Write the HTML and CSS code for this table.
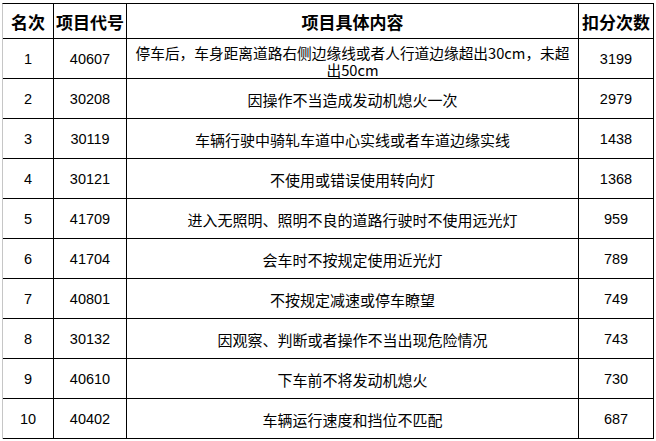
FILE: index.html
```html
<!DOCTYPE html>
<html lang="zh-CN">
<head>
<meta charset="utf-8">
<title>扣分排行</title>
<link rel="stylesheet" href="styles.css">
</head>
<body>
<div class="sheet">
  <div class="grid">
    <div class="cell head">名次</div>
    <div class="cell head">项目代号</div>
    <div class="cell head">项目具体内容</div>
    <div class="cell head">扣分次数</div>

    <div class="cell num">1</div>
    <div class="cell num">40607</div>
    <div class="cell text two"><span class="wrap">停车后，车身距离道路右侧边缘线或者人行道边缘超出30cm，未超出50cm</span></div>
    <div class="cell num">3199</div>

    <div class="cell num">2</div>
    <div class="cell num">30208</div>
    <div class="cell text">因操作不当造成发动机熄火一次</div>
    <div class="cell num">2979</div>

    <div class="cell num">3</div>
    <div class="cell num">30119</div>
    <div class="cell text">车辆行驶中骑轧车道中心实线或者车道边缘实线</div>
    <div class="cell num">1438</div>

    <div class="cell num">4</div>
    <div class="cell num">30121</div>
    <div class="cell text">不使用或错误使用转向灯</div>
    <div class="cell num">1368</div>

    <div class="cell num">5</div>
    <div class="cell num">41709</div>
    <div class="cell text">进入无照明、照明不良的道路行驶时不使用远光灯</div>
    <div class="cell num">959</div>

    <div class="cell num">6</div>
    <div class="cell num">41704</div>
    <div class="cell text">会车时不按规定使用近光灯</div>
    <div class="cell num">789</div>

    <div class="cell num">7</div>
    <div class="cell num">40801</div>
    <div class="cell text">不按规定减速或停车瞭望</div>
    <div class="cell num">749</div>

    <div class="cell num">8</div>
    <div class="cell num">30132</div>
    <div class="cell text">因观察、判断或者操作不当出现危险情况</div>
    <div class="cell num">743</div>

    <div class="cell num">9</div>
    <div class="cell num">40610</div>
    <div class="cell text">下车前不将发动机熄火</div>
    <div class="cell num">730</div>

    <div class="cell num">10</div>
    <div class="cell num">40402</div>
    <div class="cell text">车辆运行速度和挡位不匹配</div>
    <div class="cell num">687</div>
  </div>
</div>
</body>
</html>
```

FILE: styles.css
```css
html, body {
  margin: 0;
  padding: 0;
  background: #ffffff;
}

.sheet {
  padding: 3px 0 0 2px;
}

.grid {
  display: grid;
  grid-template-columns: 51px 73px 452px 75px;
  grid-template-rows: 35px repeat(10, 40px);
  width: max-content;
  border-left: 1px solid #c6c6c6;
  border-top: 1px solid #000000;
  color: #000000;
}

.cell {
  box-sizing: border-box;
  border-right: 1px solid #000000;
  border-bottom: 1px solid #000000;
  display: flex;
  align-items: center;
  justify-content: center;
  text-align: center;
  overflow: hidden;
  white-space: nowrap;
}

.head {
  font-family: "Noto Sans CJK SC", sans-serif;
  font-weight: 700;
  font-size: 17px;
  padding-top: 1px;
}

.num {
  font-family: "Liberation Sans", "Noto Sans CJK SC", sans-serif;
  font-size: 14.5px;
  padding-top: 1px;
}

.text {
  font-family: "Noto Sans CJK SC", sans-serif;
  font-size: 15px;
  padding-top: 2px;
}

.two {
  font-size: 14.7px;
  line-height: 17px;
  padding: 4px 4px 0 4px;
  white-space: normal;
}

.wrap {
  display: block;
  width: 100%;
  text-align: center;
  word-break: break-all;
}
```
